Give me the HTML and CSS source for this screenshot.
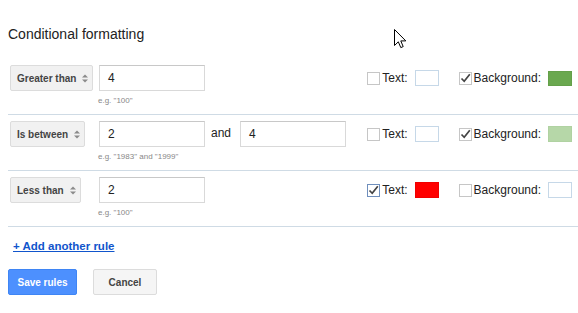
FILE: index.html
```
<!DOCTYPE html>
<html>
<head>
<meta charset="utf-8">
<link rel="stylesheet" href="styles.css">
</head>
<body>
<div class="page">
  <h1 class="title">Conditional formatting</h1>
  <div class="rules">
    <div class="rule">
      <div class="rule-row">
        <div class="cond"><div class="select">Greater than<svg class="arrows" width="6" height="9" viewBox="0 0 6 9"><polygon points="0,3.5 3,0.5 6,3.5"/><polygon points="0,5.5 6,5.5 3,8.5"/></svg></div></div>
        <div class="input">4</div>
        <div class="formats">
          <div class="fmt"><span class="cb"></span><span class="lbl">Text:</span><span class="swatch empty"></span></div>
          <div class="fmt"><span class="cb"><svg width="13" height="13" viewBox="0 0 13 13"><path d="M2.5 6.5 L5.2 9.3 L10.8 2.2" /></svg></span><span class="lbl">Background:</span><span class="swatch green"></span></div>
        </div>
      </div>
      <div class="hint">e.g. "100"</div>
    </div>
    <div class="rule">
      <div class="rule-row">
        <div class="cond"><div class="select">Is between<svg class="arrows" width="6" height="9" viewBox="0 0 6 9"><polygon points="0,3.5 3,0.5 6,3.5"/><polygon points="0,5.5 6,5.5 3,8.5"/></svg></div></div>
        <div class="input">2</div>
        <span class="and">and</span>
        <div class="input">4</div>
        <div class="formats">
          <div class="fmt"><span class="cb"></span><span class="lbl">Text:</span><span class="swatch empty"></span></div>
          <div class="fmt"><span class="cb"><svg width="13" height="13" viewBox="0 0 13 13"><path d="M2.5 6.5 L5.2 9.3 L10.8 2.2" /></svg></span><span class="lbl">Background:</span><span class="swatch light-green"></span></div>
        </div>
      </div>
      <div class="hint">e.g. "1983" and "1999"</div>
    </div>
    <div class="rule">
      <div class="rule-row">
        <div class="cond"><div class="select">Less than<svg class="arrows" width="6" height="9" viewBox="0 0 6 9"><polygon points="0,3.5 3,0.5 6,3.5"/><polygon points="0,5.5 6,5.5 3,8.5"/></svg></div></div>
        <div class="input">2</div>
        <div class="formats">
          <div class="fmt"><span class="cb focused"><svg width="13" height="13" viewBox="0 0 13 13"><path d="M2.5 6.5 L5.2 9.3 L10.8 2.2" /></svg></span><span class="lbl">Text:</span><span class="swatch red"></span></div>
          <div class="fmt"><span class="cb"></span><span class="lbl">Background:</span><span class="swatch empty"></span></div>
        </div>
      </div>
      <div class="hint">e.g. "100"</div>
    </div>
  </div>
  <a class="add-link" href="#">+ Add another rule</a>
  <div class="actions">
    <button class="btn primary">Save rules</button>
    <button class="btn">Cancel</button>
  </div>
  <svg class="cursor" width="13" height="20" viewBox="0 0 13 20"><path d="M0.5 0.5 L0.5 16.5 L4.3 12.8 L6.8 18.6 L9.2 17.6 L6.8 11.9 L11.8 11.9 Z" fill="#fff" stroke="#000" stroke-width="1" stroke-linejoin="miter"/></svg>
</div>
</body>
</html>
```
FILE: styles.css
```
html, body {
  margin: 0;
  padding: 0;
  background: #fff;
}
body {
  font-family: "Liberation Sans", Arial, sans-serif;
  color: #222;
}
.page {
  position: relative;
  padding: 26px 0 0 8px;
}
.title {
  margin: 0;
  font-size: 14px;
  line-height: 17px;
  font-weight: normal;
  color: #222;
}
.rules {
  margin-top: 16px;
}
.rule {
  padding: 6px 6px 9px 2px;
  border-bottom: 1px solid #cfdbe5;
}
.rule-row {
  display: flex;
  align-items: center;
  height: 26px;
}
.cond {
  width: 89px;
  flex: none;
}
.select {
  display: inline-flex;
  align-items: center;
  box-sizing: border-box;
  height: 26px;
  padding: 0 4px 0 6px;
  background: #f1f1f1;
  border: 1px solid #dcdcdc;
  border-radius: 2px;
  font-size: 10px;
  font-weight: bold;
  color: #444;
}
.arrows {
  margin-left: 6px;
  fill: #8a8a8a;
}
.input {
  box-sizing: border-box;
  width: 106px;
  height: 26px;
  padding-left: 8px;
  border: 1px solid #d9d9d9;
  border-top-color: #c8c8c8;
  font-size: 12px;
  line-height: 24px;
  color: #222;
}
.and {
  font-size: 12px;
  margin: 0 9px 0 6px;
  line-height: 20px;
  position: relative;
  top: -1px;
}
.formats {
  margin-left: auto;
  display: flex;
  align-items: center;
}
.fmt {
  display: flex;
  align-items: center;
}
.fmt + .fmt {
  margin-left: 20px;
}
.cb {
  width: 13px;
  height: 13px;
  box-sizing: border-box;
  border: 1px solid #c6c6c6;
  background: #fff;
  margin-right: 2px;
  position: relative;
}
.cb svg {
  position: absolute;
  left: -1px;
  top: -1px;
}
.cb path {
  fill: none;
  stroke: #444;
  stroke-width: 1.7;
}
.cb.focused {
  border-color: #6f8fbd;
}
.lbl {
  font-size: 12px;
  color: #222;
}
.swatch {
  width: 24px;
  height: 16px;
  box-sizing: border-box;
  margin-left: 7px;
}
.swatch.empty {
  background: #fff;
  border: 1px solid #c6d8e8;
}
.swatch.green {
  background: #6aa84f;
  border: 1px solid #64a04a;
  height: 15px;
}
.swatch.light-green {
  background: #b6d7a8;
  border: 1px solid #b0d2a2;
}
.swatch.red {
  background: #ff0000;
  border: 1px solid #f00000;
}
.hint {
  margin: 5px 0 0 88px;
  font-size: 8px;
  line-height: 9px;
  color: #888;
}
.add-link {
  display: inline-block;
  margin: 12px 0 0 5px;
  font-size: 11.5px;
  line-height: 14px;
  font-weight: bold;
  color: #15c;
  text-decoration: underline;
}
.actions {
  display: flex;
  gap: 16px;
  margin-top: 15px;
}
.btn {
  box-sizing: border-box;
  height: 26px;
  padding: 0;
  border: 1px solid #dcdcdc;
  background: #f5f5f5;
  border-radius: 2px;
  font-family: "Liberation Sans", Arial, sans-serif;
  font-size: 10px;
  font-weight: bold;
  color: #444;
  width: 64px;
}
.btn.primary {
  width: 69px;
  background: #4d90fe;
  border-color: #3f85f4;
  color: #fff;
}
.cursor {
  position: absolute;
  left: 394px;
  top: 29px;
}
```
